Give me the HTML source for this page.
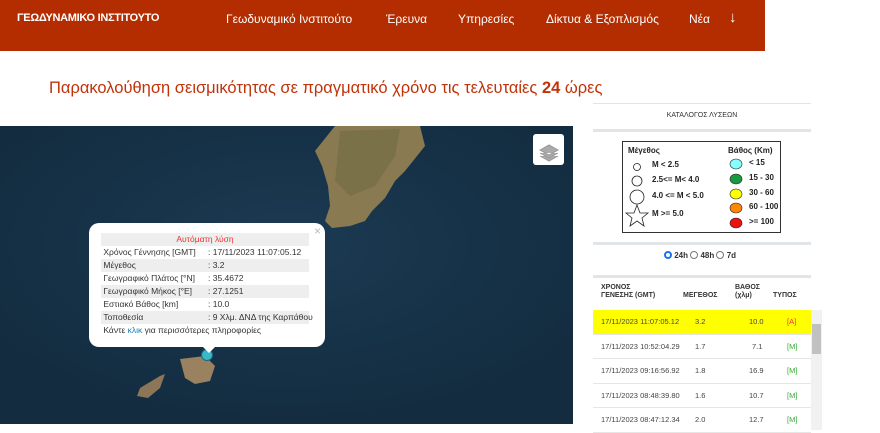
<!DOCTYPE html>
<html><head><meta charset="utf-8"><style>
*{margin:0;padding:0;box-sizing:border-box}
body{width:880px;height:424px;overflow:hidden;background:#fff;font-family:"Liberation Sans",sans-serif;position:relative}
.hdr{position:absolute;left:0;top:0;width:765px;height:51px;background:#b32d00;color:#fff}
.hdr .logo{position:absolute;left:17px;top:12px;font-weight:bold;font-size:11px;letter-spacing:-0.3px}
.hdr span.n{position:absolute;top:12px;font-size:12px}
h1{position:absolute;left:49px;top:79px;font-size:16.5px;font-weight:normal;color:#c0330a;white-space:nowrap}
.map{position:absolute;left:0;top:126px;width:573px;height:298px;background:#17334a;overflow:hidden}
.pop{position:absolute;left:89px;top:223px;width:236px;height:124px;background:#fff;border-radius:10px;font-size:8.5px;color:#333}
.pop .t{position:absolute;left:12px;width:208px;height:13px;line-height:13px;white-space:nowrap}
.pop .g{background:#eee}
.pop .v{position:absolute;left:107px}
.side{position:absolute;left:593px;top:103px;width:218px}
.line{height:3px;background:#e2e5e8}
.rows div.r{height:24.5px;border-bottom:1px solid #e6e6e6;font-size:7.5px;color:#444;position:relative;line-height:24px}
.r span{position:absolute}
</style></head><body>
<div class="hdr">
<div class="logo">ΓΕΩΔΥΝΑΜΙΚΟ ΙΝΣΤΙΤΟΥΤΟ</div>
<span class="n" style="left:226px">Γεωδυναμικό Ινστιτούτο</span>
<span class="n" style="left:386px">Έρευνα</span>
<span class="n" style="left:458px">Υπηρεσίες</span>
<span class="n" style="left:546px">Δίκτυα &amp; Εξοπλισμός</span>
<span class="n" style="left:689px">Νέα</span>
<span class="n" style="left:729px;font-size:15px;top:9px">↓</span>
</div>
<h1>Παρακολούθηση σεισμικότητας σε πραγματικό χρόνο τις τελευταίες <b>24</b> ώρες</h1>
<div class="map">
<svg width="573" height="298" style="position:absolute;left:0;top:0">
<defs><radialGradient id="g" cx="50%" cy="40%" r="60%"><stop offset="0" stop-color="#1b3a52"/><stop offset="1" stop-color="#132c40"/></radialGradient></defs>
<rect width="573" height="298" fill="url(#g)"/>
<path d="M335 0 L420 0 L425 20 L405 45 L395 55 L385 72 L372 85 L365 95 L350 100 L332 102 L325 95 L330 80 L328 60 L322 40 L315 25 Z" fill="#8a7a52"/>
<path d="M340 5 L400 3 L395 30 L375 60 L350 70 L335 55 Z" fill="#6f6a42" opacity=".6"/>
<path d="M180 233 L205 230 L215 240 L210 255 L195 258 L185 252 Z" fill="#9a8260"/>
<path d="M140 262 L160 250 L165 248 L160 262 L148 272 L137 270 Z" fill="#8d7658"/>
<circle cx="207" cy="229" r="5.5" fill="#3bb8c8" stroke="#1b6a7a" stroke-width="1"/>
<rect x="533" y="8" width="31" height="31" rx="3" fill="#fff"/>
<path d="M540 24 L549 19 L558 24 L549 29 Z M540 27 L549 32 L558 27 M540 30 L549 35 L558 30" fill="#aaa" stroke="#999" stroke-width="1"/>
</svg>
</div>
<div class="pop">
<div style="position:absolute;right:4px;top:1px;color:#bbb;font-size:12px">×</div>
<div class="t g" style="top:10px;text-align:center;color:#e33">Αυτόματη λύση</div>
<div class="t" style="top:23px">&nbsp;Χρόνος Γέννησης [GMT]<span class="v">: 17/11/2023 11:07:05.12</span></div>
<div class="t g" style="top:36px">&nbsp;Μέγεθος<span class="v">: 3.2</span></div>
<div class="t" style="top:49px">&nbsp;Γεωγραφικό Πλάτος [°N]<span class="v">: 35.4672</span></div>
<div class="t g" style="top:62px">&nbsp;Γεωγραφικό Μήκος [°E]<span class="v">: 27.1251</span></div>
<div class="t" style="top:75px">&nbsp;Εστιακό Βάθος [km]<span class="v">: 10.0</span></div>
<div class="t g" style="top:88px">&nbsp;Τοποθεσία<span class="v">: 9 Χλμ. ΔΝΔ της Καρπάθου</span></div>
<div class="t" style="top:101px">&nbsp;Κάντε <span style="color:#1a7fb5">κλικ</span> για περισσότερες πληροφορίες</div>
<div style="position:absolute;left:114px;bottom:-6px;border:6px solid transparent;border-top-color:#fff;border-bottom:0"></div>
</div>
<div class="side">
<div style="height:1px;background:#e2e5e8"></div>
<div style="height:25px;line-height:24px;text-align:center;font-size:7px;color:#333">ΚΑΤΑΛΟΓΟΣ ΛΥΣΕΩΝ</div>
<div class="line"></div>
<div style="position:absolute;left:29px;top:38px;width:159px;height:92px;border:1px solid #333;font-size:8px;font-weight:bold;color:#222">
<div style="position:absolute;left:5px;top:4px">Μέγεθος</div>
<div style="position:absolute;left:105px;top:4px">Βάθος (Km)</div>
<svg width="159" height="92" style="position:absolute;left:0;top:0">
<circle cx="14" cy="25" r="3.5" fill="#fff" stroke="#222" stroke-width=".8"/>
<circle cx="14" cy="39" r="5" fill="#fff" stroke="#222" stroke-width=".8"/>
<circle cx="14" cy="55" r="7" fill="#fff" stroke="#222" stroke-width=".8"/>
<path d="M14 63 L17 71 L25 71 L19 76 L21 84 L14 79 L7 84 L9 76 L3 71 L11 71 Z" fill="#fff" stroke="#222" stroke-width=".8"/>
<ellipse cx="113" cy="22" rx="6" ry="5" fill="#8ff" stroke="#222" stroke-width=".6"/>
<ellipse cx="113" cy="37" rx="6" ry="5" fill="#1a9a40" stroke="#222" stroke-width=".6"/>
<ellipse cx="113" cy="52" rx="6" ry="5" fill="#ff0" stroke="#222" stroke-width=".6"/>
<ellipse cx="113" cy="66" rx="6" ry="5" fill="#f80" stroke="#222" stroke-width=".6"/>
<ellipse cx="113" cy="81" rx="6" ry="5" fill="#e11" stroke="#222" stroke-width=".6"/>
</svg>
<div style="position:absolute;left:29px;top:18px">M &lt; 2.5</div>
<div style="position:absolute;left:29px;top:33px">2.5&lt;= M&lt; 4.0</div>
<div style="position:absolute;left:29px;top:49px">4.0 &lt;= M &lt; 5.0</div>
<div style="position:absolute;left:29px;top:67px">M &gt;= 5.0</div>
<div style="position:absolute;left:126px;top:16px">&lt; 15</div>
<div style="position:absolute;left:126px;top:31px">15 - 30</div>
<div style="position:absolute;left:126px;top:46px">30 - 60</div>
<div style="position:absolute;left:126px;top:60px">60 - 100</div>
<div style="position:absolute;left:126px;top:75px">&gt;= 100</div>
</div>
<div style="position:absolute;top:139px;width:218px" class="line"></div>
<div style="position:absolute;top:148px;left:71px;font-size:8px;font-weight:bold;color:#333;white-space:nowrap"><span style="display:inline-block;width:8px;height:8px;border-radius:50%;border:2px solid #1a73e8;vertical-align:-1px"></span> 24h <span style="display:inline-block;width:8px;height:8px;border-radius:50%;border:1px solid #777;vertical-align:-1px"></span> 48h <span style="display:inline-block;width:8px;height:8px;border-radius:50%;border:1px solid #777;vertical-align:-1px"></span> 7d</div>
<div style="position:absolute;top:172px;width:218px" class="line"></div>
<div style="position:absolute;top:181px;left:8px;font-size:7px;font-weight:bold;color:#333;line-height:8px">ΧΡΟΝΟΣ<br>ΓΕΝΕΣΗΣ (GMT)</div>
<div style="position:absolute;top:189px;left:90px;font-size:7px;font-weight:bold;color:#333">ΜΕΓΕΘΟΣ</div>
<div style="position:absolute;top:181px;left:142px;font-size:7px;font-weight:bold;color:#333;line-height:8px">ΒΑΘΟΣ<br>(χλμ)</div>
<div style="position:absolute;top:189px;left:180px;font-size:7px;font-weight:bold;color:#333">ΤΥΠΟΣ</div>
<div class="rows" style="position:absolute;top:207px;left:0;width:218px">
<div class="r" style="background:#ff0"><span style="left:8px">17/11/2023 11:07:05.12</span><span style="left:102px">3.2</span><span style="left:156px">10.0</span><span style="left:194px;color:#e33">[A]</span></div>
<div class="r"><span style="left:8px">17/11/2023 10:52:04.29</span><span style="left:102px">1.7</span><span style="left:159px">7.1</span><span style="left:194px;color:#3a3">[M]</span></div>
<div class="r"><span style="left:8px">17/11/2023 09:16:56.92</span><span style="left:102px">1.8</span><span style="left:156px">16.9</span><span style="left:194px;color:#3a3">[M]</span></div>
<div class="r"><span style="left:8px">17/11/2023 08:48:39.80</span><span style="left:102px">1.6</span><span style="left:156px">10.7</span><span style="left:194px;color:#3a3">[M]</span></div>
<div class="r"><span style="left:8px">17/11/2023 08:47:12.34</span><span style="left:102px">2.0</span><span style="left:156px">12.7</span><span style="left:194px;color:#3a3">[M]</span></div>
</div>
<div style="position:absolute;left:218px;top:207px;width:11px;height:120px;background:#f1f1f1"><div style="position:absolute;left:1px;top:14px;width:9px;height:30px;background:#c1c1c1"></div></div>
</div>
</body></html>
